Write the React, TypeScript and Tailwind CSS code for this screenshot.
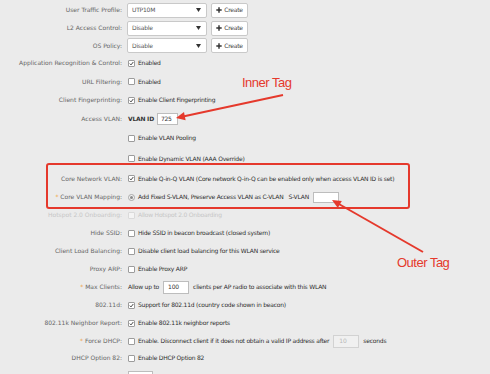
import React from "react";

const Check = ({ checked = false, disabled = false }: { checked?: boolean; disabled?: boolean }) => (
  <span
    className={`inline-flex items-center justify-center w-[7px] h-[7px] shrink-0 rounded-[1px] border ${
      disabled ? "border-[#dadada] bg-[#f4f4f4]" : "border-[#9c9c9c] bg-white"
    }`}
  >
    {checked && (
      <svg width="5" height="5" viewBox="0 0 10 10">
        <path d="M1.5 5.2 L4 7.8 L8.6 2" fill="none" stroke="#333" strokeWidth="1.8" />
      </svg>
    )}
  </span>
);

const Label = ({ text, star = false, light = false }: { text: string; star?: boolean; light?: boolean }) => (
  <div className={`w-[122px] shrink-0 text-right ${light ? "text-[#c6c6c6]" : "text-[#666]"}`}>
    {star && <span className="text-[#f0a040]">* </span>}
    {text}
  </div>
);

const Row = ({ h, children }: { h: string; children: React.ReactNode }) => (
  <div className={`flex items-center ${h}`}>{children}</div>
);

const Ctl = ({ children }: { children: React.ReactNode }) => (
  <div className="flex items-center pl-[6px] text-[#2f2f2f] tracking-[-0.22px] whitespace-nowrap">{children}</div>
);

const Select = ({ value }: { value: string }) => (
  <div className="-ml-[1px] flex items-center justify-between w-[80px] h-[15px] border border-[#c9c9c9] rounded-[2px] bg-white pl-[4px] pr-[5px]">
    <span className="text-[#555]">{value}</span>
    <svg width="5" height="4" viewBox="0 0 10 8">
      <path d="M0 0 L10 0 L5 8 Z" fill="#333" />
    </svg>
  </div>
);

const Create = () => (
  <div className="ml-[4px] flex items-center justify-center gap-[2px] w-[37px] h-[15px] border border-[#c9c9c9] rounded-[2px] bg-white text-[#444]">
    <svg width="6" height="6" viewBox="0 0 10 10">
      <path d="M5 0.5 V9.5 M0.5 5 H9.5" stroke="#333" strokeWidth="2.4" />
    </svg>
    <span>Create</span>
  </div>
);

export default function App() {
  return (
    <div
      className="relative w-[490px] h-[374px] overflow-hidden bg-[#ebebeb] text-[6px] leading-none"
      style={{ fontFamily: '"DejaVu Sans", Verdana, sans-serif' }}
    >
      <div className="flex flex-col pt-[1px]">
        <Row h="h-[18px]">
          <Label text="User Traffic Profile:" />
          <Ctl>
            <Select value="UTP10M" />
            <Create />
          </Ctl>
        </Row>
        <Row h="h-[18px]">
          <Label text="L2 Access Control:" />
          <Ctl>
            <Select value="Disable" />
            <Create />
          </Ctl>
        </Row>
        <Row h="h-[17px]">
          <Label text="OS Policy:" />
          <Ctl>
            <Select value="Disable" />
            <Create />
          </Ctl>
        </Row>
        <Row h="h-[18px]">
          <Label text="Application Recognition & Control:" />
          <Ctl>
            <Check checked />
            <span className="ml-[3px]">Enabled</span>
          </Ctl>
        </Row>
        <Row h="h-[19px]">
          <Label text="URL Filtering:" />
          <Ctl>
            <Check />
            <span className="ml-[3px]">Enabled</span>
          </Ctl>
        </Row>
        <Row h="h-[18px]">
          <Label text="Client Fingerprinting:" />
          <Ctl>
            <Check checked />
            <span className="ml-[3px]">Enable Client Fingerprinting</span>
          </Ctl>
        </Row>
        <Row h="h-[19px]">
          <Label text="Access VLAN:" />
          <Ctl>
            <span className="font-bold text-[#333]">VLAN ID</span>
            <div className="ml-[3px] flex items-center w-[21px] h-[12px] border border-[#bdbdbd] bg-white pl-[3px] text-[#333]">
              725
            </div>
          </Ctl>
        </Row>
        <Row h="h-[20px]">
          <div className="w-[122px] shrink-0" />
          <Ctl>
            <Check />
            <span className="ml-[3px]">Enable VLAN Pooling</span>
          </Ctl>
        </Row>
        <Row h="h-[21px]">
          <div className="w-[122px] shrink-0" />
          <Ctl>
            <Check />
            <span className="ml-[3px]">Enable Dynamic VLAN (AAA Override)</span>
          </Ctl>
        </Row>
        <Row h="h-[19px]">
          <Label text="Core Network VLAN:" />
          <Ctl>
            <Check checked />
            <span className="ml-[3px]">
              Enable Q-in-Q VLAN (Core network Q-in-Q can be enabled only when access VLAN ID is set)
            </span>
          </Ctl>
        </Row>
        <Row h="h-[18px]">
          <Label text="Core VLAN Mapping:" star />
          <Ctl>
            <span className="flex items-center justify-center w-[7px] h-[7px] rounded-full border border-[#a8a8a8] bg-[#f2f2f2]">
              <span className="w-[3px] h-[3px] rounded-full bg-[#8a8a8a]" />
            </span>
            <span className="ml-[3px]">Add Fixed S-VLAN, Preserve Access VLAN as C-VLAN</span>
            <span className="ml-[5px]">S-VLAN</span>
            <div className="ml-[4px] w-[26px] h-[11px] border border-[#bdbdbd] bg-white" />
          </Ctl>
        </Row>
        <Row h="h-[18px]">
          <Label text="Hotspot 2.0 Onboarding:" light />
          <Ctl>
            <Check disabled />
            <span className="ml-[3px] text-[#c6c6c6]">Allow Hotspot 2.0 Onboarding</span>
          </Ctl>
        </Row>
        <Row h="h-[18px]">
          <Label text="Hide SSID:" />
          <Ctl>
            <Check />
            <span className="ml-[3px]">Hide SSID in beacon broadcast (closed system)</span>
          </Ctl>
        </Row>
        <Row h="h-[18px]">
          <Label text="Client Load Balancing:" />
          <Ctl>
            <Check />
            <span className="ml-[3px]">Disable client load balancing for this WLAN service</span>
          </Ctl>
        </Row>
        <Row h="h-[18px]">
          <Label text="Proxy ARP:" />
          <Ctl>
            <Check />
            <span className="ml-[3px]">Enable Proxy ARP</span>
          </Ctl>
        </Row>
        <Row h="h-[18px]">
          <Label text="Max Clients:" star />
          <Ctl>
            <span>Allow up to</span>
            <div className="ml-[4px] flex items-center w-[26px] h-[13px] border border-[#bdbdbd] bg-white pl-[4px] text-[#333]">
              100
            </div>
            <span className="ml-[4px]">clients per AP radio to associate with this WLAN</span>
          </Ctl>
        </Row>
        <Row h="h-[18px]">
          <Label text="802.11d:" />
          <Ctl>
            <Check checked />
            <span className="ml-[3px]">Support for 802.11d (country code shown in beacon)</span>
          </Ctl>
        </Row>
        <Row h="h-[18px]">
          <Label text="802.11k Neighbor Report:" />
          <Ctl>
            <Check checked />
            <span className="ml-[3px]">Enable 802.11k neighbor reports</span>
          </Ctl>
        </Row>
        <Row h="h-[18px]">
          <Label text="Force DHCP:" star />
          <Ctl>
            <Check />
            <span className="ml-[3px]">
              Enable. Disconnect client if it does not obtain a valid IP address after
            </span>
            <div className="ml-[4px] flex items-center w-[26px] h-[13px] border border-[#d2d2d2] bg-[#f0f0f0] pl-[5px] text-[#b8b8b8]">
              10
            </div>
            <span className="ml-[4px]">seconds</span>
          </Ctl>
        </Row>
        <Row h="h-[16px]">
          <Label text="DHCP Option 82:" />
          <Ctl>
            <Check />
            <span className="ml-[3px]">Enable DHCP Option 82</span>
          </Ctl>
        </Row>
        <div className="flex mt-[5px]">
          <div className="w-[122px] shrink-0" />
          <div className="pl-[6px]">
            <div className="w-[25px] h-[12px] border border-[#bdbdbd] bg-white" />
          </div>
        </div>
      </div>

      {/* annotation overlay */}
      <div className="absolute left-[46px] top-[163px] w-[364px] h-[46px] border-2 border-[#e5392c] rounded-[3px] pointer-events-none" />
      <div
        className="absolute left-[242px] top-[76px] text-[13px] leading-none tracking-[-0.5px] text-[#e5392c]"
        style={{ fontFamily: '"Liberation Sans", Arial, sans-serif' }}
      >
        Inner Tag
      </div>
      <div
        className="absolute left-[397px] top-[256px] text-[13px] leading-none tracking-[-0.5px] text-[#e5392c]"
        style={{ fontFamily: '"Liberation Sans", Arial, sans-serif' }}
      >
        Outer Tag
      </div>
      <svg className="absolute left-0 top-0 pointer-events-none" width="490" height="374">
        <line x1="283" y1="95" x2="183" y2="116.5" stroke="#e5392c" strokeWidth="2" />
        <polygon points="176,118 185.6,120.2 184,112" fill="#e5392c" />
        <line x1="423" y1="252" x2="338" y2="203.5" stroke="#e5392c" strokeWidth="2" />
        <polygon points="332,200 341.8,201 337.8,208" fill="#e5392c" />
      </svg>
    </div>
  );
}
